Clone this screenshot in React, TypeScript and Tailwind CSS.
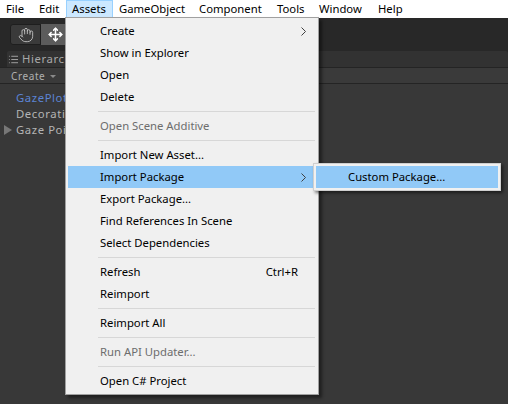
import React from 'react';
import { Hand, Move, List } from 'lucide-react';

type Item = { t: string; s?: string; d?: boolean; a?: boolean; h?: boolean } | 'sep';
const items: Item[] = [
  { t: 'Create', a: true }, { t: 'Show in Explorer' }, { t: 'Open' }, { t: 'Delete' }, 'sep',
  { t: 'Open Scene Additive', d: true }, 'sep',
  { t: 'Import New Asset...' }, { t: 'Import Package', a: true, h: true }, { t: 'Export Package...' },
  { t: 'Find References In Scene' }, { t: 'Select Dependencies' }, 'sep',
  { t: 'Refresh', s: 'Ctrl+R' }, { t: 'Reimport' }, 'sep',
  { t: 'Reimport All' }, 'sep',
  { t: 'Run API Updater...', d: true }, 'sep',
  { t: 'Open C# Project' },
];
const top: [string, string][] = [
  ['File', 'w-[33px]'], ['Edit', 'w-[33px]'], ['Assets', 'w-[47px]'], ['GameObject', 'w-[80px]'],
  ['Component', 'w-[78px]'], ['Tools', 'w-[42px]'], ['Window', 'w-[59px]'], ['Help', 'w-[40px]'],
];
const Chevron = ({ c = '#404040' }: { c?: string }) => (
  <svg width="5" height="9" viewBox="0 0 5 9" className="block"><path d="M0.5 0.5 L4.5 4.5 L0.5 8.5" fill="none" stroke={c} strokeWidth="1" /></svg>
);

export default function App() {
  return (
    <div className="relative w-[508px] h-[404px] overflow-hidden bg-[#383838] text-[11.3px] leading-none text-black" style={{ fontFamily: '"Noto Sans", sans-serif' }}>
      <div className="flex h-[18px] bg-white items-center">
        {top.map(([t, w]) => (
          <div key={t} className={`h-[18px] flex items-center pl-[5px] border ${w} ${t === 'Assets' ? 'bg-[#cce8ff] border-[#99d1ff]' : 'border-transparent'}`}>{t}</div>
        ))}
      </div>
      <div className="h-[33px] bg-[#282828] pt-[6px] pl-[10px]">
        <div className="flex w-[60px] h-[21px] rounded-[3px] overflow-hidden">
          <div className="w-[31px] bg-[#3a3a3a] border border-[#1e1e1e] rounded-l-[3px] flex items-center justify-center text-[#c8c8c8]"><Hand size={16} strokeWidth={1.3} /></div>
          <div className="w-[29px] bg-[#5c5c5c] flex items-center justify-center text-white"><Move size={15} strokeWidth={2.4} /></div>
        </div>
      </div>
      <div className="h-[16px] bg-[#282828] pl-[7px]">
        <div className="h-full flex items-center bg-[#323232] rounded-t-[2px] pl-[1px] text-[#a8a8a8] gap-[3px] tracking-[0.6px]"><List size={11} /><span>Hierarchy</span></div>
      </div>
      <div className="h-[17px] bg-[#3a3a3a] border-y border-[#242424] flex items-center pl-[11px] text-[10px] text-[#b0b0b0] tracking-[0.6px]">
        Create
        <span className="ml-[5px] mt-[1px] w-0 h-0 border-x-[3px] border-x-transparent border-t-[3px] border-t-[#8a8a8a]" />
      </div>
      <div className="pt-[6px] text-[#b4b4b4] tracking-[0.6px] leading-[16px]">
        <div className="pl-[16px] text-[#5b84d4]">GazePlot</div>
        <div className="pl-[16px]">Decoration</div>
        <div className="pl-[4px] flex items-center gap-[4px]"><span className="w-0 h-0 border-y-[5px] border-y-transparent border-l-[8px] border-l-[#777]" />Gaze Points</div>
      </div>

      <div className="absolute left-[65px] top-[17px] w-[254px] h-[378px] bg-[#f0f0f0] border border-[#a0a0a0] py-[2px] pl-[2px] pr-[2px] shadow-[3px_3px_3px_rgba(0,0,0,0.45)]">
        {items.map((it, i) =>
          it === 'sep' ? (
            <div key={i} className="h-[7px] flex items-center pl-[30px] pr-[1px]"><div className="h-px w-full bg-[#d7d7d7]" /></div>
          ) : (
            <div key={i} className={`h-[22px] flex items-center pl-[32px] pr-[10px] ${it.h ? 'bg-[#91c9f7]' : ''} ${it.d ? 'text-[#6d6d6d]' : ''}`}>
              <span className="flex-1">{it.t}</span>
              {it.s && <span className="mr-[8px]">{it.s}</span>}
              {it.a && <Chevron />}
            </div>
          ),
        )}
      </div>

      <div className="absolute left-[313px] top-[163px] w-[188px] h-[28px] bg-[#91c9f7] border-[3px] border-[#f0f0f0] outline outline-1 outline-[#cfcfcf] -outline-offset-1 shadow-[2px_2px_3px_rgba(0,0,0,0.5)] flex items-center pl-[32px]">Custom Package...</div>
    </div>
  );
}
